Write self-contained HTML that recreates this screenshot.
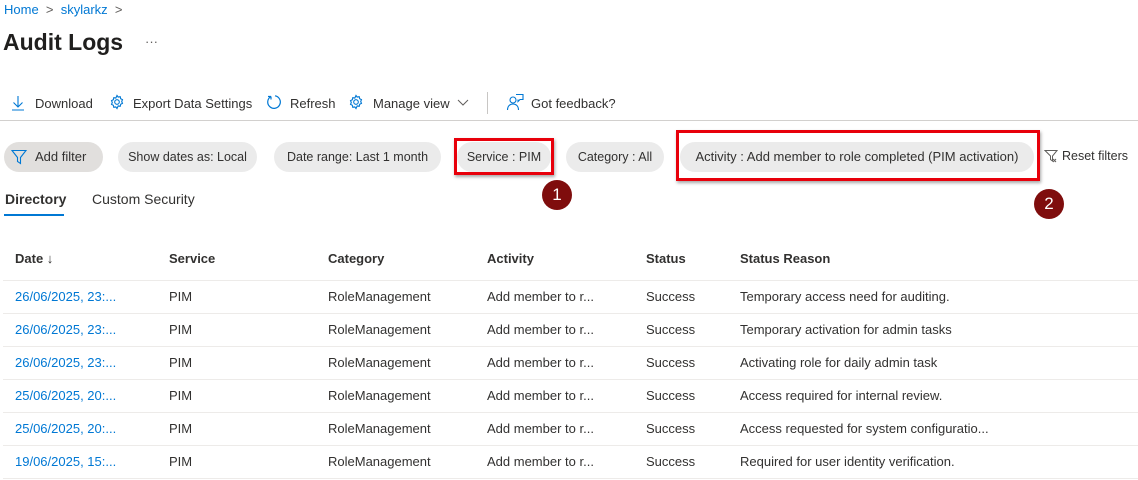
<!DOCTYPE html>
<html><head><meta charset="utf-8"><style>
*{margin:0;padding:0;box-sizing:border-box}
body{width:1138px;height:480px;overflow:hidden;background:#fff;font-family:"Segoe UI","Liberation Sans",sans-serif;font-size:13px;color:#323130;position:relative}
.a{position:absolute;white-space:nowrap}
.blue{color:#0078d4}
.pill{position:absolute;top:142px;height:30px;border-radius:15px;background:#ebebeb;line-height:30px;padding:0 8px;font-size:13px;color:#323130;white-space:nowrap;text-align:center;overflow:hidden}
.red{position:absolute;border:3px solid #e8000b;box-shadow:1px 2px 3px rgba(0,0,0,.35)}
.circ{position:absolute;width:30px;height:30px;border-radius:50%;background:#7f0d0d;color:#fff;text-align:center;line-height:30px;font-size:17px}
.row{position:absolute;left:3px;width:1135px;height:1px;background:#edebe9}
.h{font-weight:600;color:#323130}
</style></head><body>
<div class="a blue" style="left:4px;top:2px">Home <span style="color:#605e5c">&nbsp;&gt;&nbsp;</span> skylarkz <span style="color:#605e5c">&nbsp;&gt;</span></div>
<div class="a" style="left:3px;top:29px;font-size:23px;font-weight:600;color:#201f1e">Audit Logs</div>
<div class="a" style="left:145px;top:34px;color:#605e5c">···</div>

<svg class="a" style="left:11px;top:95px" width="14" height="16" viewBox="0 0 14 16" fill="none" stroke="#0078d4" stroke-width="1.1"><path d="M7 1v11M2.5 7.5L7 12l4.5-4.5M1 15h12"/></svg>
<div class="a" style="left:35px;top:95px;line-height:18px">Download</div>
<svg class="a" style="left:109px;top:94px" width="16" height="16" viewBox="0 0 16 16" fill="none" stroke="#0078d4" stroke-width="1.1"><circle cx="8" cy="8" r="2.3"/><path d="M8 1.5l1.2 1.6 2-.4.5 2 1.8.9-.8 1.9.8 1.9-1.8.9-.5 2-2-.4L8 14.5l-1.2-1.6-2 .4-.5-2-1.8-.9.8-1.9-.8-1.9 1.8-.9.5-2 2 .4z"/></svg>
<div class="a" style="left:133px;top:95px;line-height:18px">Export Data Settings</div>
<svg class="a" style="left:266px;top:94px" width="16" height="16" viewBox="0 0 16 16" fill="none" stroke="#0078d4" stroke-width="1.2"><path d="M5 2.5A6.3 6.3 0 1 0 9 1.8M5 2.5V5.5M5 2.5H2"/></svg>
<div class="a" style="left:290px;top:95px;line-height:18px">Refresh</div>
<svg class="a" style="left:348px;top:94px" width="16" height="16" viewBox="0 0 16 16" fill="none" stroke="#0078d4" stroke-width="1.1"><circle cx="8" cy="8" r="2.3"/><path d="M8 1.5l1.2 1.6 2-.4.5 2 1.8.9-.8 1.9.8 1.9-1.8.9-.5 2-2-.4L8 14.5l-1.2-1.6-2 .4-.5-2-1.8-.9.8-1.9-.8-1.9 1.8-.9.5-2 2 .4z"/></svg>
<div class="a" style="left:373px;top:95px;line-height:18px">Manage view</div>
<svg class="a" style="left:457px;top:99px" width="12" height="8" viewBox="0 0 12 8" fill="none" stroke="#605e5c"><path d="M1 1l5 5 5-5"/></svg>
<div class="a" style="left:487px;top:92px;width:1px;height:22px;background:#c8c6c4"></div>
<svg class="a" style="left:506px;top:93px" width="18" height="18" viewBox="0 0 18 18" fill="none" stroke="#0078d4" stroke-width="1.1"><circle cx="7" cy="7" r="3"/><path d="M1.5 17c0-4 2.5-6 5.5-6s5.5 2 5.5 6M10 1.5h7v5h-3l-2 2v-2"/></svg>
<div class="a" style="left:531px;top:95px;line-height:18px">Got feedback?</div>
<div class="a" style="left:0;top:120px;width:1138px;height:1px;background:#d2d0ce"></div>

<div class="pill" style="left:4px;width:99px;background:#e1dfdd;padding-left:31px;text-align:left">Add filter</div>
<svg class="a" style="left:11px;top:149px" width="16" height="16" viewBox="0 0 16 16" fill="none" stroke="#0078d4" stroke-width="1.1"><path d="M1 1.5h14L9.5 8.5v6l-3-2v-4z"/></svg>
<div class="pill" style="left:118px;width:139px;font-size:12.5px">Show dates as: Local</div>
<div class="pill" style="left:274px;width:167px;font-size:12.5px">Date range: Last 1 month</div>
<div class="pill" style="left:457px;width:94px;font-size:12.5px">Service : PIM</div>
<div class="pill" style="left:566px;width:98px;font-size:12.5px">Category : All</div>
<div class="pill" style="left:680px;width:354px">Activity : Add member to role completed (PIM activation)</div>
<div class="red" style="left:454px;top:138px;width:100px;height:37px"></div>
<div class="red" style="left:676px;top:130px;width:364px;height:51px"></div>
<div class="circ" style="left:542px;top:180px">1</div>
<div class="circ" style="left:1034px;top:189px">2</div>
<svg class="a" style="left:1044px;top:149px" width="14" height="14" viewBox="0 0 14 14" fill="none" stroke="#605e5c"><path d="M1 1.5h12L8.5 7v5l-2-1.5V7z M9 10l3 3M12 10l-3 3"/></svg>
<div class="a" style="left:1062px;top:149px;font-size:12.5px">Reset filters</div>

<div class="a" style="left:5px;top:191px;font-size:14px;font-weight:600;color:#323130">Directory</div>
<div class="a" style="left:4px;top:214px;width:60px;height:2px;background:#0078d4"></div>
<div class="a" style="left:92px;top:191px;font-size:14px">Custom Security</div>

<div class="a h" style="left:15px;top:251px">Date ↓</div>
<div class="a h" style="left:169px;top:251px">Service</div>
<div class="a h" style="left:328px;top:251px">Category</div>
<div class="a h" style="left:487px;top:251px">Activity</div>
<div class="a h" style="left:646px;top:251px">Status</div>
<div class="a h" style="left:740px;top:251px">Status Reason</div>

<div class="row" style="top:280px"></div>
<div class="row" style="top:313px"></div>
<div class="row" style="top:346px"></div>
<div class="row" style="top:379px"></div>
<div class="row" style="top:412px"></div>
<div class="row" style="top:445px"></div>
<div class="row" style="top:478px"></div>

<div class="a blue" style="left:15px;top:289px">26/06/2025, 23:...</div><div class="a" style="left:169px;top:289px">PIM</div><div class="a" style="left:328px;top:289px">RoleManagement</div><div class="a" style="left:487px;top:289px">Add member to r...</div><div class="a" style="left:646px;top:289px">Success</div><div class="a" style="left:740px;top:289px">Temporary access need for auditing.</div>
<div class="a blue" style="left:15px;top:322px">26/06/2025, 23:...</div><div class="a" style="left:169px;top:322px">PIM</div><div class="a" style="left:328px;top:322px">RoleManagement</div><div class="a" style="left:487px;top:322px">Add member to r...</div><div class="a" style="left:646px;top:322px">Success</div><div class="a" style="left:740px;top:322px">Temporary activation for admin tasks</div>
<div class="a blue" style="left:15px;top:355px">26/06/2025, 23:...</div><div class="a" style="left:169px;top:355px">PIM</div><div class="a" style="left:328px;top:355px">RoleManagement</div><div class="a" style="left:487px;top:355px">Add member to r...</div><div class="a" style="left:646px;top:355px">Success</div><div class="a" style="left:740px;top:355px">Activating role for daily admin task</div>
<div class="a blue" style="left:15px;top:388px">25/06/2025, 20:...</div><div class="a" style="left:169px;top:388px">PIM</div><div class="a" style="left:328px;top:388px">RoleManagement</div><div class="a" style="left:487px;top:388px">Add member to r...</div><div class="a" style="left:646px;top:388px">Success</div><div class="a" style="left:740px;top:388px">Access required for internal review.</div>
<div class="a blue" style="left:15px;top:421px">25/06/2025, 20:...</div><div class="a" style="left:169px;top:421px">PIM</div><div class="a" style="left:328px;top:421px">RoleManagement</div><div class="a" style="left:487px;top:421px">Add member to r...</div><div class="a" style="left:646px;top:421px">Success</div><div class="a" style="left:740px;top:421px">Access requested for system configuratio...</div>
<div class="a blue" style="left:15px;top:454px">19/06/2025, 15:...</div><div class="a" style="left:169px;top:454px">PIM</div><div class="a" style="left:328px;top:454px">RoleManagement</div><div class="a" style="left:487px;top:454px">Add member to r...</div><div class="a" style="left:646px;top:454px">Success</div><div class="a" style="left:740px;top:454px">Required for user identity verification.</div>
</body></html>
